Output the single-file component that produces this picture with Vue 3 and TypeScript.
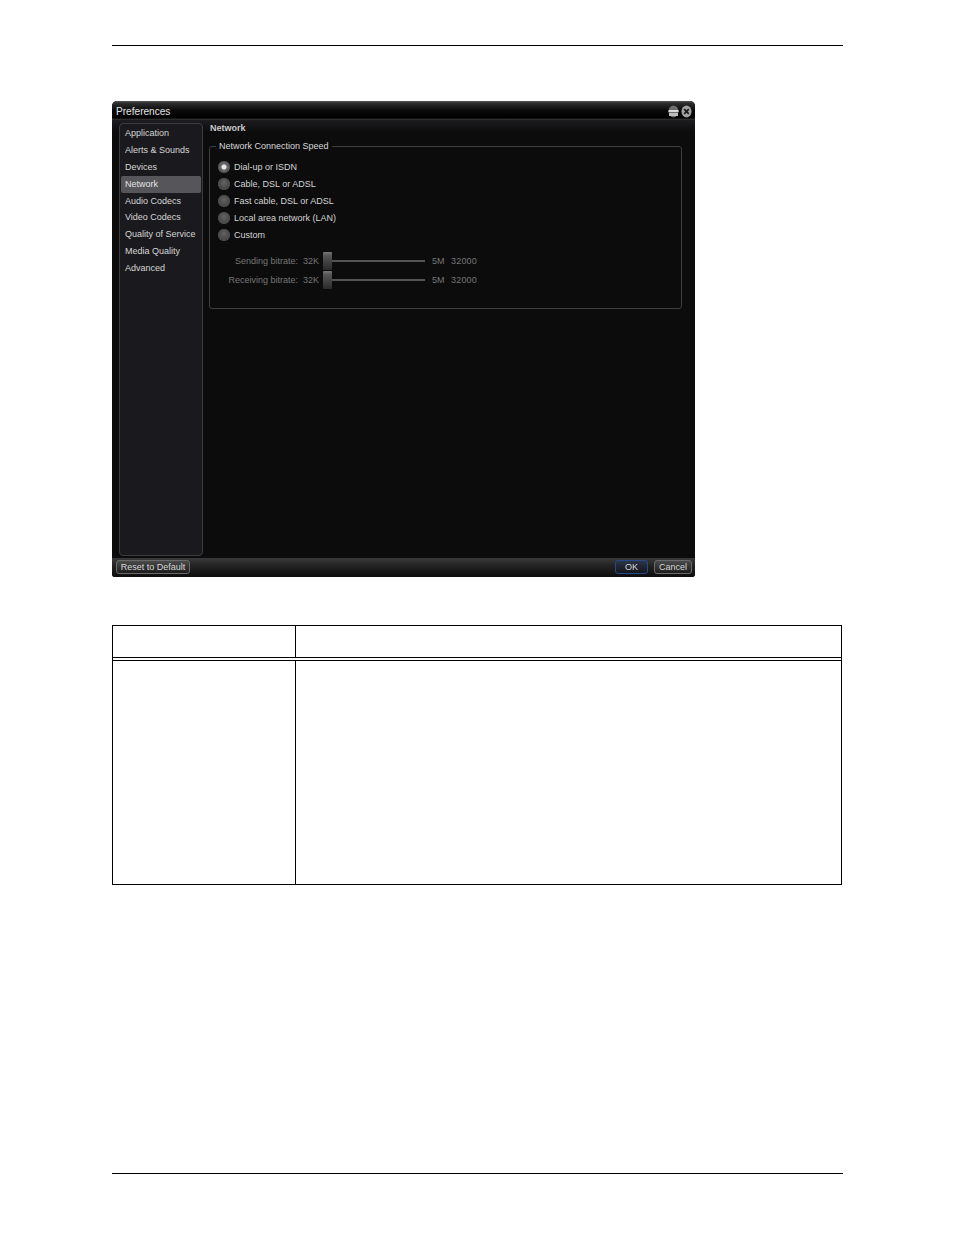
<script setup lang="ts">
const navItems = ['Application', 'Alerts & Sounds', 'Devices', 'Network', 'Audio Codecs', 'Video Codecs', 'Quality of Service', 'Media Quality', 'Advanced']
const speeds = ['Dial-up or ISDN', 'Cable, DSL or ADSL', 'Fast cable, DSL or ADSL', 'Local area network (LAN)', 'Custom']
const bitrates = ['Sending bitrate:', 'Receiving bitrate:']
</script>

<template>
  <div class="page">
    <div class="rule top-rule"></div>
    <div class="window">
      <div class="titlebar">
        <span class="title">Preferences</span>
        <div class="win-btns">
          <svg width="11" height="13" viewBox="0 0 11 13"><ellipse cx="5.5" cy="6.5" rx="5" ry="6" fill="#6e6e6e"/><rect x="0.5" y="5" width="10" height="2" fill="#d8d8d8"/><rect x="1" y="8" width="9" height="3" fill="#bdbdbd"/></svg>
          <svg width="11" height="13" viewBox="0 0 11 13"><ellipse cx="5.5" cy="6.5" rx="5" ry="6" fill="#a2a2a2"/><path d="M3.2 4.2 7.8 8.8M7.8 4.2 3.2 8.8" stroke="#1a1a1a" stroke-width="1.8"/></svg>
        </div>
      </div>
      <div class="body">
        <nav class="sidebar">
          <div v-for="item in navItems" :key="item" class="nav-item" :class="{ active: item === 'Network' }">{{ item }}</div>
        </nav>
        <main class="content">
          <div class="heading">Network</div>
          <fieldset class="group">
            <legend>Network Connection Speed</legend>
            <div class="radios">
              <div v-for="(s, i) in speeds" :key="s" class="radio-row">
                <span class="radio" :class="{ on: i === 0 }"></span>
                <span>{{ s }}</span>
              </div>
            </div>
            <div class="sliders">
              <div v-for="b in bitrates" :key="b" class="slider-row">
                <span class="s-label">{{ b }}</span>
                <span class="s-min">32K</span>
                <span class="s-track"><span class="s-thumb"></span></span>
                <span class="s-max">5M</span>
                <span class="s-val">32000</span>
              </div>
            </div>
          </fieldset>
        </main>
      </div>
      <div class="footer">
        <button class="btn reset">Reset to Default</button>
        <div class="footer-right">
          <button class="btn ok">OK</button>
          <button class="btn cancel">Cancel</button>
        </div>
      </div>
    </div>
    <div class="table">
      <div class="t-head">
        <div class="c1"></div>
        <div class="c2"></div>
      </div>
      <div class="t-row">
        <div class="c1"></div>
        <div class="c2"></div>
      </div>
    </div>
    <div class="rule bottom-rule"></div>
  </div>
</template>

<style>
html, body { margin: 0; background: #fff; }
</style>

<style scoped>
.page {
  width: 954px;
  height: 1235px;
  box-sizing: border-box;
  padding: 45px 111px 0 112px;
  background: #fff;
  font-family: "Liberation Sans", Arial, sans-serif;
  overflow: hidden;
}
.rule { height: 1px; background: #000; }
.window {
  width: 583px;
  height: 476px;
  margin-top: 55px;
  border-radius: 5px 5px 3px 3px;
  background: #0c0c0d;
  display: flex;
  flex-direction: column;
  overflow: hidden;
  font-size: 9px;
  color: #dcdcdc;
}
.titlebar {
  height: 19px;
  flex: none;
  display: flex;
  align-items: center;
  justify-content: space-between;
  padding: 0 3px 0 4px;
  background: linear-gradient(#555 0, #2c2c2c 12%, #0a0a0a 50%, #000 88%, #3a3a3a 100%);
}
.title { font-size: 10.1px; color: #e4e4e4; padding-top: 1px; }
.win-btns { display: flex; gap: 2px; margin-top: 1px; }
.body {
  flex: 1;
  display: flex;
  min-height: 0;
  background: linear-gradient(#1d1d1f 0, #0c0c0d 12px);
}
.sidebar {
  width: 82px;
  margin: 3px 0 3px 7px;
  border: 1px solid #3c3c40;
  border-radius: 4px;
  background: #1a1a1e;
  padding-top: 1px;
  flex: none;
  box-sizing: content-box;
  height: 430px;
}
.nav-item {
  height: 16.9px;
  line-height: 17.8px;
  margin: 0 1px;
  padding-left: 4px;
  color: #d6d6d6;
  white-space: nowrap;
}
.nav-item.active {
  background: #55555a;
  border-radius: 2px;
  color: #e4e4e4;
  line-height: 17px;
}
.content { flex: 1; padding: 3px 13px 0 6px; min-width: 0; }
.heading { font-weight: 700; font-size: 9px; color: #c9c9c9; height: 11px; line-height: 11px; padding-left: 1px; }
.group {
  margin: 7px 0 0;
  padding: 0;
  height: 168px;
  box-sizing: border-box;
  border: 1px solid #3e3e40;
  border-radius: 3px;
  min-width: 0;
}
legend {
  margin-left: 6px;
  padding: 0 3px;
  font-size: 9px;
  line-height: 11px;
  color: #d8d8d8;
}
.radios { padding: 6px 0 0 8px; }
.radio-row {
  height: 17px;
  display: flex;
  align-items: center;
  gap: 4px;
  color: #d4d4d4;
}
.radio {
  width: 12px;
  height: 12px;
  border-radius: 50%;
  background: radial-gradient(circle at 50% 40%, #626262, #383838);
  box-shadow: inset 0 0 0 1px #4c4c4c;
  flex: none;
}
.radio.on {
  background: radial-gradient(circle, #e8e8e8 0 2px, #6a6a6a 3px, #555 100%);
}
.sliders { padding-top: 9px; color: #767676; }
.slider-row { height: 18.5px; display: flex; align-items: center; }
.s-label { width: 88px; text-align: right; white-space: nowrap; }
.s-min { margin-left: 5px; width: 20px; }
.s-track {
  position: relative;
  width: 102px;
  height: 2px;
  background: #545454;
}
.s-thumb {
  position: absolute;
  left: 0;
  top: -8px;
  width: 9px;
  height: 18px;
  border-radius: 1px;
  background: linear-gradient(#777 0, #555 20%, #2a2a2a 100%);
}
.s-max { margin-left: 7px; width: 19px; }
.s-val { letter-spacing: 0.2px; }
.footer {
  height: 19px;
  flex: none;
  box-sizing: border-box;
  display: flex;
  align-items: center;
  justify-content: space-between;
  padding: 0 3px 2px;
  background: linear-gradient(#3a3a3a 0, #232323 40%, #0c0c0c 100%);
}
.footer-right { display: flex; gap: 6px; }
.btn {
  height: 14px;
  padding: 0;
  font: 9px "Liberation Sans", Arial, sans-serif;
  line-height: 12px;
  color: #d8d8d8;
  border: 1px solid #6a6a6a;
  border-radius: 3px;
  background: linear-gradient(#4a4a4a, #1c1c1c);
}
.reset { width: 74px; margin-left: 1px; }
.ok { width: 33px; border-color: #254a8c; background: linear-gradient(#2c3446, #14161c); }
.cancel { width: 38px; }
.table {
  margin-top: 48px;
  width: 730px;
  height: 260px;
  box-sizing: border-box;
  border: 1px solid #000;
  display: flex;
  flex-direction: column;
}
.t-head {
  height: 31px;
  display: flex;
  border-bottom: 1px solid #000;
  flex: none;
}
.t-row {
  flex: 1;
  display: flex;
  margin-top: 2px;
  border-top: 1px solid #000;
}
.c1 { width: 182px; border-right: 1px solid #000; flex: none; }
.c2 { flex: 1; }
.bottom-rule { margin-top: 288px; }
</style>
